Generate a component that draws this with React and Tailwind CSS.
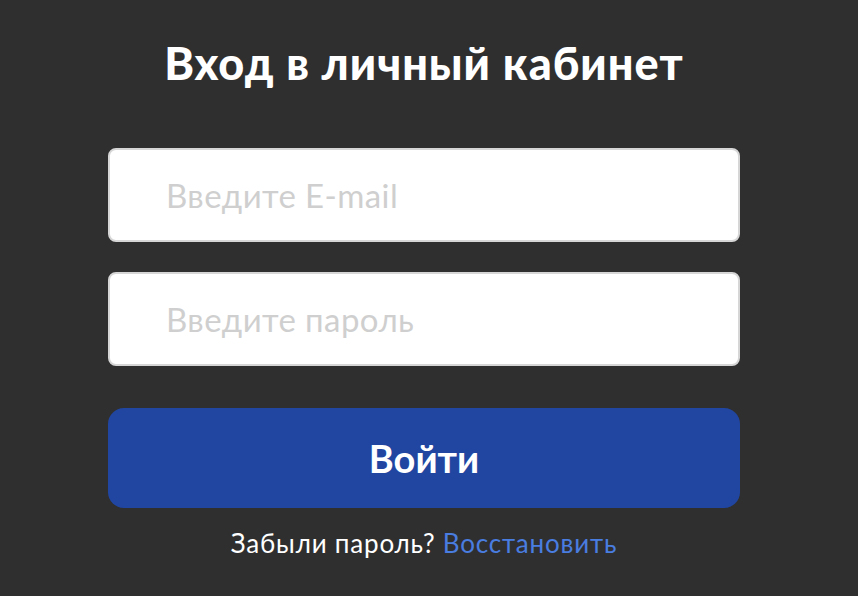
import React, { useState } from "react";

const App = () => {
  const [email, setEmail] = useState("");
  const [password, setPassword] = useState("");

  return (
    <div className="min-h-screen bg-[#2f2f2f] font-['Lato',sans-serif]">
      <div className="ml-[108px] w-[632px] pt-[32px] flex flex-col">
        <h1 className="text-center text-[45px] leading-[62px] tracking-[1px] font-black text-white">
          Вход в личный кабинет
        </h1>

        <input
          type="email"
          value={email}
          onChange={(e) => setEmail(e.target.value)}
          placeholder="Введите E-mail"
          className="mt-[54px] h-[94px] w-full rounded-[8px] border-2 border-[#d6d6d6] bg-white pl-[56px] text-[33px] tracking-[0.4px] text-[#333] placeholder:text-[#cfcfcf] outline-none"
        />
        <input
          type="password"
          value={password}
          onChange={(e) => setPassword(e.target.value)}
          placeholder="Введите пароль"
          className="mt-[30px] h-[94px] w-full rounded-[8px] border-2 border-[#d6d6d6] bg-white pl-[56px] text-[33px] tracking-[0.4px] text-[#333] placeholder:text-[#cfcfcf] outline-none"
        />

        <button
          type="submit"
          className="mt-[42px] h-[100px] w-full rounded-[16px] bg-[#2046a2] text-[38px] font-bold text-white"
        >
          Войти
        </button>

        <p className="mt-[18px] text-center text-[26px] leading-[34px] tracking-[0.8px] text-white">
          Забыли пароль? <a href="#" className="text-[#4a7de0]">Восстановить</a>
        </p>
      </div>
    </div>
  );
};

export default App;
